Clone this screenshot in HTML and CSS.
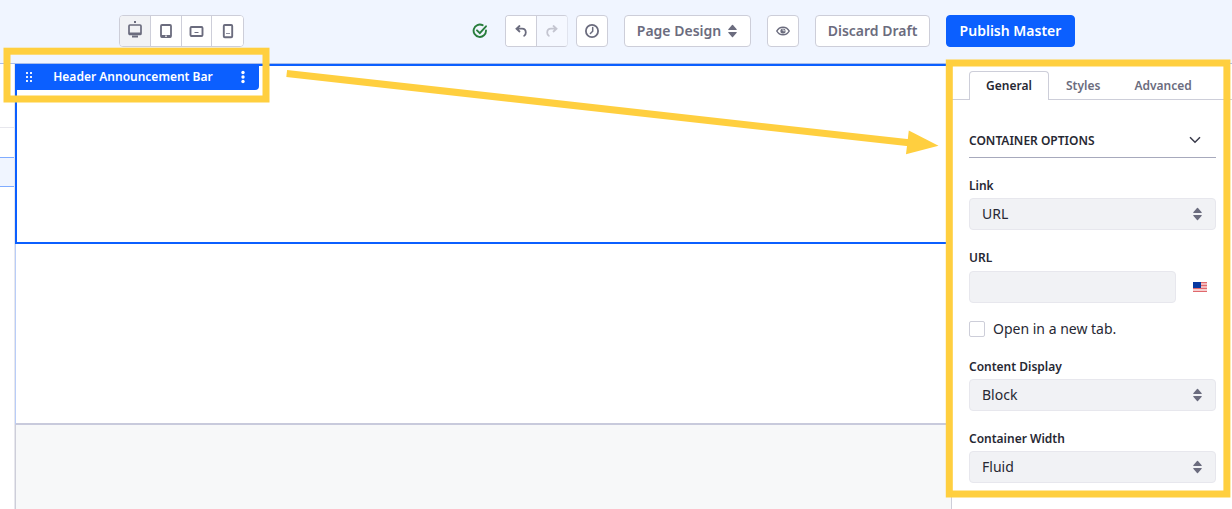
FILE: index.html
```html
<!DOCTYPE html>
<html lang="en">
<head>
<meta charset="utf-8">
<title>Page Design</title>
<link rel="stylesheet" href="styles.css">
</head>
<body>
<svg class="defs" width="0" height="0">
  <symbol id="carets" viewBox="0 0 16 16"><path d="M4.300 6.200L8 2q.5-.5 1 0l3.700 4.200q.4.800-.4.800H4.700q-.8 0-.4-.8zM4.300 9.800q-.4-.8.4-.8h7.600q.8 0 .4.800L9 14q-.5.500-1 0z" fill="#6b6c7e"/></symbol>
</svg>
<div class="app">
  <header class="toolbar">
    <div class="group devices">
      <button class="cell active"><svg class="desktop" width="16" height="18"><path d="M7 0h2v2H7zM5 14.500h6v2H5z" fill="#6b6c7e"/><rect x="2" y="4" width="12" height="9.500" rx="1" fill="#f1f2f5" stroke="#6b6c7e" stroke-width="1.700"/><path d="M2 11.500h12v2H2z" fill="#6b6c7e"/></svg></button>
      <button class="cell"><svg width="16" height="16"><rect x="3" y="2" width="10" height="12" rx="1" fill="none" stroke="#6b6c7e" stroke-width="1.800"/><path d="M3 12h10v2.500H3z" fill="#6b6c7e"/><path d="M7.300 12.600h1.400V14H7.300z" fill="#fff"/></svg></button>
      <button class="cell"><svg width="16" height="16"><rect x="2.500" y="4" width="12" height="9" rx="1" fill="none" stroke="#6b6c7e" stroke-width="1.900"/><path d="M6.500 9.500h4" stroke="#6b6c7e"/></svg></button>
      <button class="cell"><svg width="16" height="16"><rect x="3.800" y="2" width="8.400" height="12.200" rx="1" fill="none" stroke="#6b6c7e" stroke-width="1.900"/><path d="M6 10.500h4" stroke="#8f90a0"/></svg></button>
    </div>
    <svg class="saved" width="16" height="16" fill="none" stroke="#287d3c" stroke-width="1.900" stroke-linecap="round"><path d="M10.600 2.200A6.200 6.200 0 1 0 14 7.500"/><path d="M5 7.300l2.800 2.800L14 3.300"/></svg>
    <div class="group history">
      <button class="cell"><svg width="16" height="16" fill="none" stroke="#6b6c7e" stroke-width="1.800" stroke-linecap="round"><path d="M6.500 3L3.500 5.700l3 2.800M4 5.700h5c2.500 0 3.800 1.800 3.800 3.800 0 1.500-.7 2.800-1.600 3.300"/></svg></button>
      <button class="cell disabled"><svg width="16" height="16" fill="none" stroke="#c4c5d0" stroke-width="1.800" stroke-linecap="round"><path d="M9.500 3l3 2.700-3 2.800M12 5.700H7C4.500 5.700 3.200 7.500 3.200 9.500c0 1.500.7 2.800 1.600 3.300"/></svg></button>
    </div>
    <button class="btn clock"><svg width="16" height="16" fill="none" stroke="#6b6c7e"><circle cx="8" cy="8" r="6.100" stroke-width="1.800"/><path d="M8.700 4.500v3.700L6.400 10.500" stroke-width="1.500" stroke-linecap="round"/></svg></button>
    <button class="btn mode">Page Design <svg width="16" height="16"><use href="#carets"/></svg></button>
    <button class="btn eye"><svg width="16" height="16" fill="none" stroke="#6b6c7e"><path d="M1.800 8C4.500 2.900 11.500 2.900 14.200 8 11.500 13.100 4.500 13.100 1.800 8z" stroke-width="1.500"/><circle cx="8" cy="8" r="2.600" fill="#6b6c7e" stroke="none"/><path d="M8 5.500v2.300h2.500" stroke="#fff" stroke-width=".7"/></svg></button>
    <button class="btn discard">Discard Draft</button>
    <button class="btn publish">Publish Master</button>
  </header>
  <main class="work">
    <aside class="rail"><div class="rail-head"></div><div class="rail-gap"></div><div class="rail-item"></div></aside>
    <section class="canvas">
      <div class="selected">
        <div class="chip">
          <svg width="8" height="12" fill="#e7efff"><path d="M1 1h2v2H1zM5 1h2v2H5zM1 5h2v2H1zM5 5h2v2H5zM1 9h2v2H1zM5 9h2v2H5z"/></svg>
          <span class="chip-name">Header Announcement Bar</span>
          <svg width="4" height="14" fill="#fff"><circle cx="2" cy="2.500" r="1.700"/><circle cx="2" cy="7" r="1.700"/><circle cx="2" cy="11.500" r="1.700"/></svg>
        </div>
      </div>
      <div class="blank"></div>
      <div class="footer-area"></div>
    </section>
    <aside class="panel">
      <nav class="tabs"><a class="tab current">General</a><a class="tab styles">Styles</a><a class="tab advanced">Advanced</a></nav>
      <div class="form">
        <div class="section-title"><span>CONTAINER OPTIONS</span><svg width="14" height="10" fill="none" stroke="#393a4a" stroke-width="1.500"><path d="M2 2.300l5 5 5-5"/></svg></div>
        <label class="label">Link</label>
        <div class="select">URL<svg width="16" height="16"><use href="#carets"/></svg></div>
        <label class="label url-label">URL</label>
        <div class="url-row"><div class="input"></div>
          <svg width="14" height="10"><path fill="#f3b9bb" d="M0 0h14v10H0z"/><path d="M0 .5h14M0 3.500h14M0 6.500h14M0 9.500h14" stroke="#e0686c"/><path d="M0 8h14" stroke="#fae3e3"/><path fill="#0738a0" d="M0 0h8v6H0z"/></svg>
        </div>
        <div class="check"><span class="box"></span><span class="check-text">Open in a new tab.</span></div>
        <label class="label">Content Display</label>
        <div class="select">Block<svg width="16" height="16"><use href="#carets"/></svg></div>
        <label class="label">Container Width</label>
        <div class="select">Fluid<svg width="16" height="16"><use href="#carets"/></svg></div>
      </div>
    </aside>
  </main>
  <svg class="annotations" width="1232" height="509" fill="none" stroke="#ffcf3f" stroke-width="7">
    <rect x="7" y="51.200" width="259" height="47.800"/>
    <rect x="949.300" y="63" width="277.600" height="431"/>
    <path d="M286.700 73.500L909 142.800"/>
    <path d="M908.800 130.500L938.500 145.700 906 154.300z" fill="#ffcf3f" stroke="none"/>
  </svg>
</div>
</body>
</html>
```
FILE: styles.css
```css
* { box-sizing: border-box; }
body { margin: 0; font-family: "Noto Sans", sans-serif; color: #272833; overflow: hidden; }
.defs { display: none; }
.app { position: relative; width: 1232px; height: 509px; background: #fff; overflow: hidden; }
.toolbar { display: flex; align-items: flex-start; height: 64px; padding: 15px 0 0 119px; background: #f0f5ff; border-bottom: 1px solid #a9bdea; }
button { font: 600 14px/20px "Noto Sans", sans-serif; color: #6b6c7e; padding: 0; }
svg { display: block; flex: none; }
.group { display: flex; height: 32px; border: 1px solid #cdced9; border-radius: 4px; background: #fff; overflow: hidden; }
.cell { display: flex; align-items: center; justify-content: center; width: 31px; border: 0; border-right: 1px solid #cdced9; background: #fff; }
.cell:last-child { border-right: 0; }
.active { background: #f1f2f5; }
.devices { width: 125px; }
.desktop { margin-bottom: 2px; }
.saved { margin: 8px 0 0 228px; }
.history { width: 63px; margin-left: 17px; border-right-color: #e1e4ee; }
.disabled { background: #f5f8ff; }
.btn { display: flex; align-items: center; justify-content: center; height: 32px; border: 1px solid #cdced9; border-radius: 4px; background: #fff; white-space: nowrap; }
.clock { width: 32px; margin-left: 8px; }
.mode { width: 127px; margin-left: 16px; padding-left: 2px; gap: 3px; }
.eye { width: 32px; margin-left: 16px; }
.discard { width: 115px; margin-left: 16px; }
.publish { width: 129px; margin-left: 16px; background: #0b5fff; border-color: #0b5fff; color: #fff; }
.work { display: grid; grid-template-columns: 15px 936px 281px; height: 445px; }
.rail { border-right: 1px solid #e7e7ed; }
.rail-head { height: 64px; border-bottom: 1px solid #e7e7ed; }
.rail-gap { height: 29px; }
.rail-item { height: 30px; background: #f0f5ff; border: 1px solid #80acff; border-width: 1px 0; }
.canvas { display: flex; flex-direction: column; }
.selected { height: 180px; border: 2px solid #0b5fff; border-right: 0; }
.chip { display: flex; align-items: center; width: 244px; height: 26px; margin: -2px 0 0 -2px; padding: 0 14px 0 10px; background: #0b5fff; border-radius: 0 0 4px 0; color: #fff; font-size: 12px; font-weight: 600; justify-content: space-between; }
.chip-name { white-space: nowrap; padding: 0 8px 2px 0; }
.blank { height: 181px; border-left: 1px solid #b8cdf8; border-bottom: 2px solid #c8cadc; }
.footer-area { flex: 1; background: #f7f8f9; border-left: 1px solid #cdced9; }
.panel { border-left: 1px solid #cdced9; background: #fff; }
.tabs { display: flex; height: 36px; padding: 7px 0 0 17px; border-bottom: 1px solid #cdced9; font-size: 12px; font-weight: 600; line-height: 27px; color: #6b6c7e; }
.current { width: 80px; height: 29px; text-align: center; border: 1px solid #cdced9; border-bottom: 0; border-radius: 4px 4px 0 0; background: #fff; color: #272833; }
.styles { margin: 1px 0 0 17px; }
.advanced { margin: 1px 0 0 34px; }
.form { width: 264px; padding: 23px 0 0 17px; font-size: 14px; }
.section-title { display: flex; justify-content: space-between; align-items: center; height: 35px; padding-right: 14px; border-bottom: 1px solid #a7a9bc; font-size: 12px; font-weight: 600; }
.label { display: block; height: 21px; margin-top: 19px; font-size: 12px; font-weight: 600; line-height: 17px; }
.url-label { height: 22px; }
.select, .input { height: 32px; border: 1px solid #e7e7ed; border-radius: 4px; background: #f1f2f5; }
.select { display: flex; align-items: flex-start; justify-content: space-between; padding: 0 10px 0 12px; line-height: 30px; }
.select svg { margin-top: 6.5px; }
.url-row { display: flex; align-items: center; gap: 17px; }
.input { width: 207px; }
.check { display: flex; align-items: center; gap: 8px; height: 20px; margin-top: 16px; }
.check-text { padding-bottom: 2px; }
.box { width: 16px; height: 16px; border: 1px solid #cdced9; border-radius: 2px; }
.annotations { position: absolute; inset: 0; }
```
